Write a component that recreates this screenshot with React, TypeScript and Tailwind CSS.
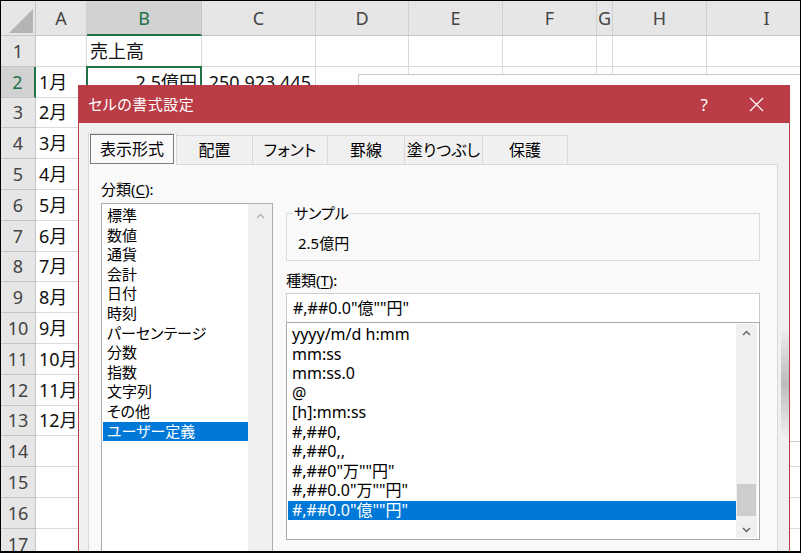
import React from "react";

const cols = [
  { key: "A", w: "w-[51px]" },
  { key: "B", w: "w-[115px]" },
  { key: "C", w: "w-[114px]" },
  { key: "D", w: "w-[93px]" },
  { key: "E", w: "w-[94px]" },
  { key: "F", w: "w-[94px]" },
  { key: "G", w: "w-[16px]" },
  { key: "H", w: "w-[94px]" },
  { key: "I", w: "w-[120px]" },
];

const months = ["1月", "2月", "3月", "4月", "5月", "6月", "7月", "8月", "9月", "10月", "11月", "12月"];

const categories = [
  "標準",
  "数値",
  "通貨",
  "会計",
  "日付",
  "時刻",
  "パーセンテージ",
  "分数",
  "指数",
  "文字列",
  "その他",
  "ユーザー定義",
];

const formats = [
  "yyyy/m/d h:mm",
  "mm:ss",
  "mm:ss.0",
  "@",
  "[h]:mm:ss",
  "#,##0,",
  "#,##0,,",
  '#,##0"万""円"',
  '#,##0.0"万""円"',
  '#,##0.0"億""円"',
];

const tabs = [
  { label: "配置", w: "w-[76px]" },
  { label: "フォント", w: "w-[75px]" },
  { label: "罫線", w: "w-[77px]" },
  { label: "塗りつぶし", w: "w-[78px]" },
  { label: "保護", w: "w-[85px]" },
];

function cellText(row: number, col: string) {
  if (row === 1 && col === "B") return "売上高";
  if (row === 2 && col === "B") return "2.5億円";
  if (row === 2 && col === "C") return "250,923,445";
  if (col === "A" && row >= 2 && row <= 13) return months[row - 2];
  return "";
}

function Chevron({ up, className }: { up?: boolean; className: string }) {
  return (
    <svg width="9" height="6" viewBox="0 0 9 6" className={className}>
      <path
        d={up ? "M1 5 L4.5 1.5 L8 5" : "M1 1 L4.5 4.5 L8 1"}
        fill="none"
        stroke="currentColor"
        strokeWidth="1.4"
      />
    </svg>
  );
}

function Sheet() {
  const rows = Array.from({ length: 17 }, (_, i) => i + 1);
  return (
    <div className="flex flex-col font-['Noto_Sans','Noto_Sans_CJK_JP',sans-serif] text-[18px] leading-none">
      {/* column headers */}
      <div className="flex h-[35px] shrink-0">
        <div className="relative w-[35px] shrink-0 border-r border-b border-[#c6c6c6] bg-[#e6e6e6]">
          <svg className="absolute left-[8px] top-[8px]" width="24" height="24">
            <path d="M24 0 L24 24 L0 24 Z" fill="#b4b4b4" />
          </svg>
        </div>
        {cols.map((c) => (
          <div
            key={c.key}
            className={`${c.w} shrink-0 flex items-center justify-center border-r ${
              c.key === "B"
                ? "bg-[#d2d2d2] border-r-[#c6c6c6] border-b-2 border-b-[#217346] text-[#217346]"
                : "bg-[#e6e6e6] border-[#d0d0d0] border-b border-b-[#c6c6c6] text-[#444]"
            }`}
          >
            {c.key}
          </div>
        ))}
      </div>

      {rows.map((r) => (
        <div key={r} className="flex h-[30.8px] shrink-0">
          <div
            className={`w-[35px] shrink-0 flex items-center justify-center border-b border-[#c6c6c6] ${
              r === 2
                ? "bg-[#d2d2d2] text-[#217346] border-r-2 border-r-[#217346]"
                : "bg-[#e6e6e6] text-[#444] border-r"
            }`}
          >
            {r}
          </div>
          {cols.map((c) => {
            const t = cellText(r, c.key);
            const right = r === 2 && (c.key === "B" || c.key === "C");
            return (
              <div
                key={c.key}
                className={`${c.w} shrink-0 relative flex items-center whitespace-nowrap overflow-visible border-r border-b border-[#dadada] text-[#111] ${
                  right ? "justify-end pr-[4px]" : "pl-[3px]"
                }`}
              >
                {t}
                {r === 2 && c.key === "B" && (
                  <div className="absolute -left-px -top-px -right-px -bottom-px border-2 border-[#217346]" />
                )}
              </div>
            );
          })}
        </div>
      ))}
    </div>
  );
}

function Dialog() {
  return (
    <div className="absolute left-[77px] top-[84px] w-[712px] h-[480px] flex flex-col border-x border-[#b93c46] bg-[#f0f0f0] font-['Noto_Sans','Noto_Sans_CJK_JP',sans-serif] text-[15px] text-black [font-feature-settings:'palt']">
      {/* title bar */}
      <div className="h-[38px] shrink-0 flex items-center justify-between bg-[#b93c46] pl-[9px] pr-[25px] text-white">
        <span className="text-[15px] tracking-[0.5px]">セルの書式設定</span>
        <div className="flex items-center gap-[41px]">
          <span className="text-[17px] leading-none">?</span>
          <svg width="15" height="15" viewBox="0 0 15 15">
            <path d="M1 1 L14 14 M14 1 L1 14" stroke="white" strokeWidth="1.2" />
          </svg>
        </div>
      </div>

      <div className="relative flex-1 flex flex-col pl-[9px] pt-[10px]">
        {/* shadow smudge on the right edge */}
        <div className="absolute right-0 top-[205px] w-[8px] h-[110px] bg-linear-to-b from-[#f0f0f0] via-[#bcbcbc] to-[#f0f0f0]" />

        {/* tabs */}
        <div className="flex items-end h-[31px] shrink-0">
          <div className="relative z-10 -mb-px w-[89px] h-[32px] border-x border-t border-[#d9d9d9] bg-[#f9f9f9] pl-px pr-[2px]">
            <div className="h-[30px] border border-[#7a7a7a] flex items-center justify-center text-[16px]">
              表示形式
            </div>
          </div>
          {tabs.map((t) => (
            <div
              key={t.label}
              className={`${t.w} h-[29px] flex items-center justify-center border-t border-r border-[#d9d9d9] bg-[#f0f0f0] text-[16px]`}
            >
              {t.label}
            </div>
          ))}
        </div>

        {/* tab page */}
        <div className="w-[690px] flex-1 flex gap-[13px] border border-[#d9d9d9] bg-[#f9f9f9] pl-[12px] pt-[14px]">
          {/* category list */}
          <div className="w-[172px] flex flex-col">
            <div className="h-[20px] leading-[20px]">
              分類(<span className="underline underline-offset-2">C</span>):
            </div>
            <div className="mt-[4px] h-[400px] flex border border-[#adadad] bg-white">
              <div className="flex-1 pl-px pt-[2px]">
                {categories.map((c, i) => (
                  <div
                    key={c}
                    className={`h-[19.6px] leading-[19.6px] pl-[4px] whitespace-nowrap ${
                      i === categories.length - 1 ? "bg-[#0078d7] text-white" : ""
                    }`}
                  >
                    {c}
                  </div>
                ))}
              </div>
              <div className="w-[24px] bg-[#f0f0f0] flex justify-center pt-[9px]">
                <Chevron up className="text-[#b4b4b4]" />
              </div>
            </div>
          </div>

          {/* right side */}
          <div className="w-[474px] flex flex-col pt-[24px]">
            <fieldset className="border border-[#dcdcdc] px-[6px] pt-[10px] pb-[7px]">
              <legend className="px-[1px] leading-[20px]">サンプル</legend>
              <div className="pl-[5px] leading-[20px]">2.5億円</div>
            </fieldset>

            <div className="mt-[9px] h-[20px] leading-[20px]">
              種類(<span className="underline underline-offset-2">T</span>):
            </div>
            <div className="mt-[3px] h-[29px] flex items-center border-x border-t border-[#cdcdcd] bg-white pl-[6px] text-[16px]">
              {'#,##0.0"億""円"'}
            </div>
            <div className="h-[218px] flex border border-[#a9a9a9] bg-white p-px">
              <div className="flex-1 pt-px">
                {formats.map((f, i) => (
                  <div
                    key={f}
                    className={`h-[19.5px] leading-[19.5px] pl-[4px] text-[16px] whitespace-nowrap ${
                      i === formats.length - 1 ? "bg-[#0078d7] text-white" : ""
                    }`}
                  >
                    {f}
                  </div>
                ))}
              </div>
              <div className="w-[21px] mr-px flex flex-col bg-[#f0f0f0]">
                <div className="h-[17px] flex items-center justify-center">
                  <Chevron up className="text-[#606060]" />
                </div>
                <div className="flex-1 flex flex-col justify-end pb-[5px]">
                  <div className="mx-px h-[32px] bg-[#cdcdcd]" />
                </div>
                <div className="h-[17px] flex items-center justify-center">
                  <Chevron className="text-[#606060]" />
                </div>
              </div>
            </div>
          </div>
        </div>
      </div>
    </div>
  );
}

export default function App() {
  return (
    <div className="relative w-[801px] h-[553px] overflow-hidden border-t border-l border-r border-b-2 border-black bg-white">
      <Sheet />
      {/* chart object behind the dialog */}
      <div className="absolute left-[357px] top-[73px] w-[460px] h-[368px] border border-[#c8c8c8] bg-white" />
      <Dialog />
    </div>
  );
}
